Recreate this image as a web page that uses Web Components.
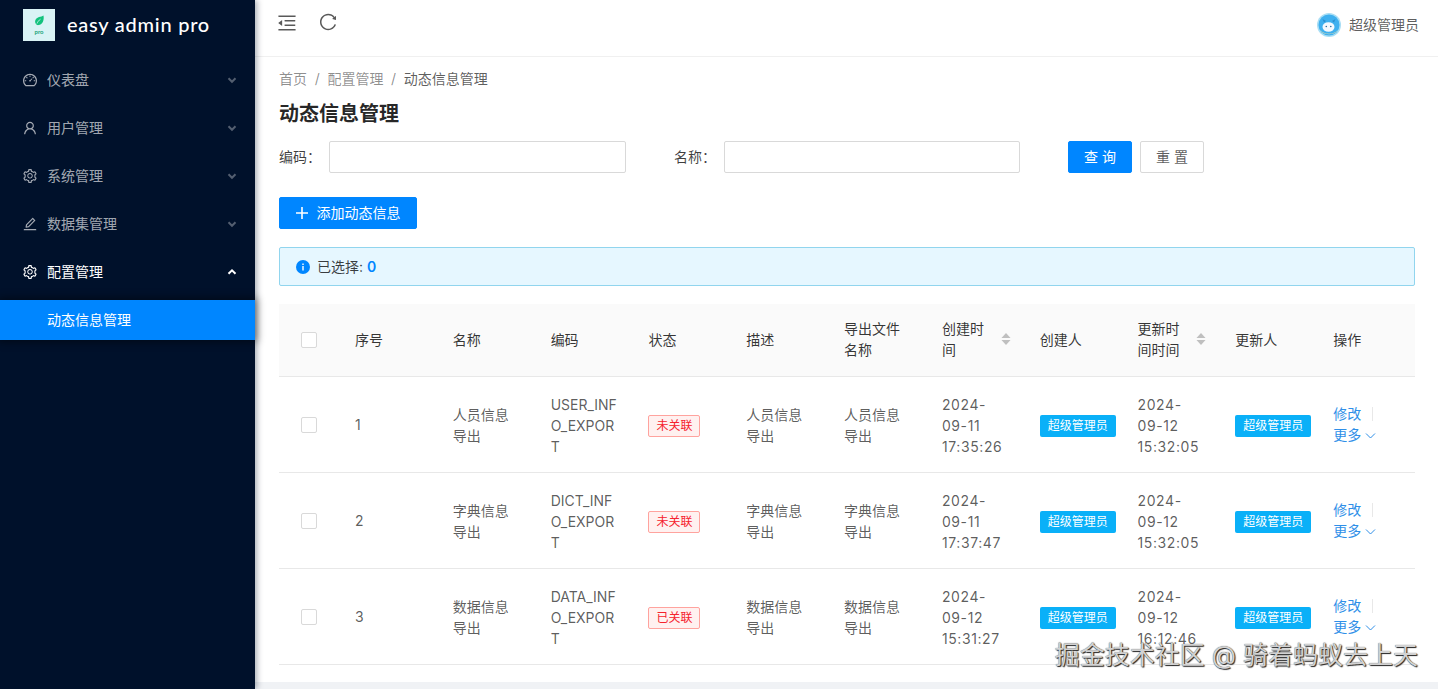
<!DOCTYPE html>
<html lang="zh">
<head>
<meta charset="utf-8">
<title>easy admin pro</title>
<style>
  html, body { margin: 0; height: 100%; overflow: hidden; background: #f0f2f5; }
  body { font-family: Inter, "Noto Sans CJK SC", sans-serif; font-size: 14px; }
</style>
</head>
<body>
<admin-app></admin-app>
<script>
const ICONS = {
  dashboard: 'M924.8 385.6a446.7 446.7 0 0 0-96-142.4 446.7 446.7 0 0 0-142.4-96C631.1 123.8 572.5 112 512 112s-119.1 11.8-174.4 35.2a446.7 446.7 0 0 0-142.4 96 446.7 446.7 0 0 0-96 142.4C75.8 440.9 64 499.5 64 560c0 132.7 58.3 257.7 159.9 343.1l1.7 1.4c5.8 4.8 13.1 7.5 20.6 7.5h531.7c7.5 0 14.8-2.7 20.6-7.5l1.7-1.4C901.7 817.7 960 692.7 960 560c0-60.5-11.9-119.1-35.2-174.4zM761.4 836H262.6A371.12 371.12 0 0 1 140 560c0-99.4 38.7-192.8 109-263 70.3-70.3 163.7-109 263-109 99.4 0 192.8 38.7 263 109 70.3 70.3 109 163.7 109 263 0 105.6-44.5 205.5-122.6 276zM623.5 421.5a8.03 8.03 0 0 0-11.3 0L527.7 506c-18.7-5-39.4-.2-54.1 14.5a55.95 55.95 0 0 0 0 79.2 55.95 55.95 0 0 0 79.2 0 55.87 55.87 0 0 0 14.5-54.1l84.5-84.5c3.1-3.1 3.1-8.2 0-11.3l-28.3-28.3zM490 320h44c4.4 0 8-3.6 8-8v-80c0-4.4-3.6-8-8-8h-44c-4.4 0-8 3.6-8 8v80c0 4.4 3.6 8 8 8zm260 218v44c0 4.4 3.6 8 8 8h80c4.4 0 8-3.6 8-8v-44c0-4.4-3.6-8-8-8h-80c-4.4 0-8 3.6-8 8zm12.7-197.2l-31.1-31.1a8.03 8.03 0 0 0-11.3 0l-56.6 56.6a8.03 8.03 0 0 0 0 11.3l31.1 31.1c3.1 3.1 8.2 3.1 11.3 0l56.6-56.6c3.1-3.1 3.1-8.2 0-11.3zm-458.6-31.1a8.03 8.03 0 0 0-11.3 0l-31.1 31.1a8.03 8.03 0 0 0 0 11.3l56.6 56.6c3.1 3.1 8.2 3.1 11.3 0l31.1-31.1c3.1-3.1 3.1-8.2 0-11.3l-56.6-56.6zM262 530h-80c-4.4 0-8 3.6-8 8v44c0 4.4 3.6 8 8 8h80c4.4 0 8-3.6 8-8v-44c0-4.4-3.6-8-8-8z',
  user: 'M858.5 763.6a374 374 0 0 0-80.6-119.5 375.63 375.63 0 0 0-119.5-80.6c-.4-.2-.8-.3-1.2-.5C719.5 518 760 444.7 760 362c0-137-111-248-248-248S264 225 264 362c0 82.7 40.5 156 102.8 201.1-.4.2-.8.3-1.2.5-44.8 18.9-85 46-119.5 80.6a375.63 375.63 0 0 0-80.6 119.5A371.7 371.7 0 0 0 136 901.8a8 8 0 0 0 8 8.2h60c4.4 0 7.9-3.5 8-7.8 2-77.2 33-149.5 87.8-204.3 56.7-56.7 132-87.9 212.2-87.9s155.5 31.2 212.2 87.9C779 752.7 810 825 812 902.2c.1 4.4 3.6 7.8 8 7.8h60a8 8 0 0 0 8-8.2c-1-47.8-10.9-94.3-29.5-138.2zM512 534c-45.9 0-89.1-17.9-121.6-50.4S340 407.9 340 362c0-45.9 17.9-89.1 50.4-121.6S466.1 190 512 190s89.1 17.9 121.6 50.4S684 316.1 684 362c0 45.9-17.9 89.1-50.4 121.6S557.9 534 512 534z',
  setting: 'M924.8 625.7l-65.5-56c3.1-19 4.7-38.4 4.7-57.8s-1.6-38.8-4.7-57.8l65.5-56a32.03 32.03 0 0 0 9.3-35.2l-.9-2.6a443.74 443.74 0 0 0-79.7-137.9l-1.8-2.1a32.12 32.12 0 0 0-35.1-9.5l-81.3 28.9c-30-24.6-63.5-44-99.7-57.6l-15.7-85a32.05 32.05 0 0 0-25.8-25.7l-2.7-.5c-52.1-9.4-106.9-9.4-159 0l-2.7.5a32.05 32.05 0 0 0-25.8 25.7l-15.8 85.4a351.86 351.86 0 0 0-99 57.4l-81.9-29.1a32 32 0 0 0-35.1 9.5l-1.8 2.1a446.02 446.02 0 0 0-79.7 137.9l-.9 2.6c-4.5 12.5-.8 26.5 9.3 35.2l66.3 56.6c-3.1 18.8-4.6 38-4.6 57.1 0 19.2 1.5 38.4 4.6 57.1L99 625.5a32.03 32.03 0 0 0-9.3 35.2l.9 2.6c18.1 50.4 44.9 96.9 79.7 137.9l1.8 2.1a32.12 32.12 0 0 0 35.1 9.5l81.9-29.1c29.8 24.5 63.1 43.9 99 57.4l15.8 85.4a32.05 32.05 0 0 0 25.8 25.7l2.7.5a449.4 449.4 0 0 0 159 0l2.7-.5a32.05 32.05 0 0 0 25.8-25.7l15.7-85a350 350 0 0 0 99.7-57.6l81.3 28.9a32 32 0 0 0 35.1-9.5l1.8-2.1c34.8-41.1 61.6-87.5 79.7-137.9l.9-2.6c4.5-12.3.8-26.3-9.3-35zM788.3 465.9c2.5 15.1 3.8 30.6 3.8 46.1s-1.3 31-3.8 46.1l-6.6 40.1 74.7 63.9a370.03 370.03 0 0 1-42.6 73.6L721 702.8l-31.4 25.8c-23.9 19.6-50.5 35-79.3 45.8l-38.1 14.3-17.9 97a377.5 377.5 0 0 1-85 0l-17.9-97.2-37.8-14.5c-28.5-10.8-55-26.2-78.7-45.7l-31.4-25.9-93.4 33.2c-17-22.9-31.2-47.6-42.6-73.6l75.5-64.5-6.5-40c-2.4-14.9-3.7-30.3-3.7-45.5 0-15.3 1.2-30.6 3.7-45.5l6.5-40-75.5-64.5c11.3-26.1 25.6-50.7 42.6-73.6l93.4 33.2 31.4-25.9c23.7-19.5 50.2-34.9 78.7-45.7l37.9-14.3 17.9-97.2c28.1-3.2 56.8-3.2 85 0l17.9 97 38.1 14.3c28.7 10.8 55.4 26.2 79.3 45.8l31.4 25.8 92.8-32.9c17 22.9 31.2 47.6 42.6 73.6L781.8 426l6.5 39.9zM512 326c-97.2 0-176 78.8-176 176s78.8 176 176 176 176-78.8 176-176-78.8-176-176-176zm79.2 255.2A111.6 111.6 0 0 1 512 614c-29.9 0-58-11.7-79.2-32.8A111.6 111.6 0 0 1 400 502c0-29.9 11.7-58 32.8-79.2C454 401.6 482.1 390 512 390c29.9 0 58 11.6 79.2 32.8A111.6 111.6 0 0 1 624 502c0 29.9-11.7 58-32.8 79.2z',
  edit: 'M257.7 752c2 0 4-.2 6-.5L431.9 722c2-.4 3.9-1.3 5.3-2.8l423.9-423.9a9.96 9.96 0 0 0 0-14.1L694.9 114.9c-1.9-1.9-4.4-2.9-7.1-2.9s-5.2 1-7.1 2.9L256.8 538.8c-1.5 1.5-2.4 3.3-2.8 5.3l-29.5 168.2a33.5 33.5 0 0 0 9.4 29.8c6.6 6.4 14.9 9.9 23.8 9.9zm67.4-174.4L687.8 215l73.3 73.3-362.7 362.6-88.9 15.7 15.6-89zM880 836H144c-17.7 0-32 14.3-32 32v36c0 4.4 3.6 8 8 8h784c4.4 0 8-3.6 8-8v-36c0-17.7-14.3-32-32-32z',
  fold: 'M408 442h480c4.4 0 8-3.6 8-8v-56c0-4.4-3.6-8-8-8H408c-4.4 0-8 3.6-8 8v56c0 4.4 3.6 8 8 8zm-8 204c0 4.4 3.6 8 8 8h480c4.4 0 8-3.6 8-8v-56c0-4.4-3.6-8-8-8H408c-4.4 0-8 3.6-8 8v56zm504-486H120c-4.4 0-8 3.6-8 8v56c0 4.4 3.6 8 8 8h784c4.4 0 8-3.6 8-8v-56c0-4.4-3.6-8-8-8zm0 632H120c-4.4 0-8 3.6-8 8v56c0 4.4 3.6 8 8 8h784c4.4 0 8-3.6 8-8v-56c0-4.4-3.6-8-8-8zM115.4 518.9L271.7 642c5.8 4.6 14.4.5 14.4-6.9V388.9c0-7.4-8.5-11.5-14.4-6.9L115.4 505.1a8.74 8.74 0 0 0 0 13.8z',
  reload: 'M909.1 209.3l-56.4 44.1C775.8 155.1 656.2 92 521.9 92 290 92 102.3 279.5 102 511.5 101.7 743.7 289.8 932 521.9 932c181.3 0 335.8-115 394.6-276.1 1.5-4.2-.7-8.9-4.9-10.3l-56.7-19.5a8 8 0 0 0-10.1 4.8c-1.8 5-3.8 10-5.9 14.9-17.3 41-42.1 77.8-73.7 109.4A344.77 344.77 0 0 1 655.9 829c-42.3 17.9-87.4 27-133.8 27-46.5 0-91.5-9.1-133.8-27A341.5 341.5 0 0 1 279 755.2a342.16 342.16 0 0 1-73.7-109.4c-17.9-42.4-27-87.4-27-133.9s9.1-91.5 27-133.9c17.3-41 42.1-77.8 73.7-109.4 31.6-31.6 68.4-56.4 109.3-73.8 42.3-17.9 87.4-27 133.8-27 46.5 0 91.5 9.1 133.8 27a341.5 341.5 0 0 1 109.3 73.8c9.9 9.9 19.2 20.4 27.8 31.4l-60.2 47a8 8 0 0 0 3 14.1l175.6 43c5 1.2 9.9-2.6 9.9-7.7l.8-180.9c-.1-6.6-7.8-10.3-13-6.2z'
}

const svgIcon = (name, size, style = '') =>
  `<svg width="${size}" height="${size}" viewBox="0 0 1024 1024" fill="currentColor" style="display:block;flex:none;${style}"><path d="${ICONS[name]}"/></svg>`

class NavItem extends HTMLElement {
  constructor () {
    super()
    this.shadow = this.attachShadow({ mode: 'open' })
  }

  connectedCallback () {
    const open = this.hasAttribute('open')
    const arrow = this.hasAttribute('sub') ? '' : `
      <svg class="arrow" width="10" height="10" viewBox="0 0 10 10" fill="none" stroke="currentColor" stroke-width="2">
        <path d="${open ? 'M1.5 6.8 5 3.3l3.5 3.5' : 'M1.5 3.3 5 6.8l3.5-3.5'}"/>
      </svg>`
    this.shadow.innerHTML = /*html*/`
      <style>
        :host {
          display: flex;
          align-items: center;
          height: 40px;
          margin-bottom: 8px;
          padding: 0 18px 0 22px;
          color: rgba(255,255,255,0.65);
          font-size: 14px;
        }
        :host([open]) { color: #fff; }
        :host([sub]) {
          margin-bottom: 0;
          padding-left: 47px;
          background: #0086ff;
          color: #fff;
          box-shadow: 0 0 8px 2px rgba(0,0,0,0.45);
        }
        .label { flex: 1; margin-left: 9px; padding-bottom: 2px; }
        :host([sub]) .label { margin-left: 0; }
        .arrow { display: block; opacity: .5; }
        :host([open]) .arrow { opacity: 1; }
      </style>
      ${this.getAttribute('icon') ? svgIcon(this.getAttribute('icon'), 16) : ''}
      <span class="label"><slot></slot></span>
      ${arrow}
    `
  }
}

class AppSidebar extends HTMLElement {
  constructor () {
    super()
    this.shadow = this.attachShadow({ mode: 'open' })
  }

  connectedCallback () {
    this.shadow.innerHTML = /*html*/`
      <style>
        :host {
          display: block;
          flex: none;
          width: 255px;
          height: 100%;
          background: #00112b;
          box-shadow: 2px 0 6px rgba(0,21,41,0.35);
          position: relative;
          z-index: 2;
        }
        .logo {
          display: flex;
          align-items: center;
          gap: 12px;
          height: 32px;
          padding: 9px 0 19px 23px;
          color: #fff;
          font-family: Lato, sans-serif;
          font-size: 20px;
          font-weight: 500;
          letter-spacing: .75px;
        }
        .logo span { padding-bottom: 3px; }
        .logo svg { display: block; }
      </style>
      <div class="logo">
        <svg width="32" height="32" viewBox="0 0 32 32">
          <rect width="32" height="32" fill="#d9f3f5"/>
          <path d="M20.500 6.500c.8 4.500-.6 9-5 9.600-1.200.2-2.700-.7-3.200-2.300-.7-2.500 1-5 3.700-5.800 1.700-.4 3.400-.6 4.500-1.500z" fill="#12c27c"/>
          <path d="M14 14.500c.7-1.800 1.800-3.200 3.500-4.300" stroke="#d9f3f5" stroke-width=".8" fill="none"/>
          <text x="16" y="24.500" text-anchor="middle" font-size="6" font-weight="700" fill="#22a57a" font-family="Lato, sans-serif" letter-spacing="0">pro</text>
        </svg>
        <span>easy admin pro</span>
      </div>
      <nav-item icon="dashboard">仪表盘</nav-item>
      <nav-item icon="user">用户管理</nav-item>
      <nav-item icon="setting">系统管理</nav-item>
      <nav-item icon="edit">数据集管理</nav-item>
      <nav-item icon="setting" open>配置管理</nav-item>
      <nav-item sub>动态信息管理</nav-item>
    `
  }
}

class AppHeader extends HTMLElement {
  constructor () {
    super()
    this.shadow = this.attachShadow({ mode: 'open' })
  }

  connectedCallback () {
    this.shadow.innerHTML = /*html*/`
      <style>
        :host {
          display: flex;
          align-items: flex-start;
          flex: none;
          box-sizing: border-box;
          height: 57px;
          padding: 0 19px 0 21px;
          background: #fff;
          border-bottom: 1px solid #f0f0f0;
          color: rgba(0,0,0,0.65);
        }
        .tools { display: flex; align-items: flex-start; gap: 20px; flex: 1; padding-top: 12px; }
        .user { display: flex; align-items: center; gap: 8px; height: 49px; }
        .user span { padding-bottom: 2px; }
        .avatar { display: block; }
      </style>
      <div class="tools">
        ${svgIcon('fold', 22)}
        ${svgIcon('reload', 20)}
      </div>
      <div class="user">
        <svg class="avatar" width="24" height="24" viewBox="0 0 24 24">
          <circle cx="12" cy="12" r="12" fill="#a8def5"/>
          <circle cx="12" cy="12" r="10.500" fill="#3fb0ef"/>
          <path d="M3.500 17c3 5 14 5 17 0-1 5.500-16 5.500-17 0z" fill="#e9dfa8"/>
          <path d="M7 9.500 5.500 6 9 8zM17 9.500 18.500 6 15 8z" fill="#2b8fd0"/>
          <ellipse cx="11.500" cy="14" rx="6" ry="4.800" fill="#f4f9ff"/>
          <circle cx="9.300" cy="13.500" r=".8" fill="#2a6d9c"/>
          <circle cx="13.800" cy="13.500" r=".8" fill="#2a6d9c"/>
        </svg>
        <span>超级管理员</span>
      </div>
    `
  }
}

class UiButton extends HTMLElement {
  constructor () {
    super()
    this.shadow = this.attachShadow({ mode: 'open' })
  }

  connectedCallback () {
    this.shadow.innerHTML = /*html*/`
      <style>
        :host {
          display: inline-flex;
          align-items: center;
          justify-content: center;
          box-sizing: border-box;
          height: 32px;
          min-width: 64px;
          padding-bottom: 2px;
          border: 1px solid #d9d9d9;
          border-radius: 2px;
          background: #fff;
          color: rgba(0,0,0,0.65);
          font-size: 14px;
        }
        :host([primary]) {
          background: #0086ff;
          border-color: #0086ff;
          color: #fff;
        }
      </style>
      <slot></slot>
    `
  }
}

class SearchForm extends HTMLElement {
  constructor () {
    super()
    this.shadow = this.attachShadow({ mode: 'open' })
  }

  connectedCallback () {
    this.shadow.innerHTML = /*html*/`
      <style>
        :host {
          display: flex;
          align-items: center;
          height: 32px;
          color: rgba(0,0,0,0.75);
        }
        .label { width: 50px; flex: none; padding-bottom: 2px; }
        .box {
          box-sizing: border-box;
          height: 32px;
          border: 1px solid #d9d9d9;
          border-radius: 2px;
          background: #fff;
        }
        .btns { display: flex; gap: 8px; margin-left: 48px; }
      </style>
      <span class="label">编码：</span>
      <div class="box" style="width:297px;margin-right:48px"></div>
      <span class="label">名称：</span>
      <div class="box" style="width:296px"></div>
      <div class="btns">
        <ui-button primary>查&nbsp;询</ui-button>
        <ui-button>重&nbsp;置</ui-button>
      </div>
    `
  }
}

class AlertBar extends HTMLElement {
  constructor () {
    super()
    this.shadow = this.attachShadow({ mode: 'open' })
  }

  connectedCallback () {
    this.shadow.innerHTML = /*html*/`
      <style>
        :host {
          display: flex;
          align-items: center;
          gap: 7px;
          box-sizing: border-box;
          height: 39px;
          padding-left: 16px;
          border: 1px solid #91d5ee;
          border-radius: 2px;
          background: #e6f7ff;
          color: rgba(0,0,0,0.75);
        }
        svg { display: block; }
        span { padding-bottom: 1px; }
        b { color: #0086ff; font-weight: 600; }
      </style>
      <svg width="14" height="14" viewBox="0 0 14 14">
        <circle cx="7" cy="7" r="7" fill="#0086ff"/>
        <rect x="6.300" y="6" width="1.400" height="4.500" fill="#fff"/>
        <rect x="6.300" y="3.500" width="1.400" height="1.500" fill="#fff"/>
      </svg>
      <span>已选择: <b>0</b></span>
    `
  }
}

class TableCell extends HTMLElement {
  constructor () {
    super()
    this.shadow = this.attachShadow({ mode: 'open' })
  }

  connectedCallback () {
    this.shadow.innerHTML = /*html*/`
      <style>
        :host {
          display: flex;
          align-items: center;
          justify-content: space-between;
          padding: 0 14px 0 16px;
          line-height: 21px;
          min-width: 0;
        }
        :host([nudge]) { padding-top: 2px; }
        :host([time]) { letter-spacing: .6px; }
        .sorter { display: flex; flex-direction: column; gap: 2px; color: #bfbfbf; margin-right: -1px; }
        .sorter svg { display: block; }
      </style>
      <div><slot></slot></div>
      ${this.hasAttribute('sort') ? `
        <div class="sorter">
          <svg width="10" height="5" viewBox="0 0 10 5"><path d="M5 0 9.500 5H.5z" fill="currentColor"/></svg>
          <svg width="10" height="5" viewBox="0 0 10 5"><path d="M5 5 .5 0h9z" fill="currentColor"/></svg>
        </div>` : ''}
    `
  }
}

class TableCheck extends HTMLElement {
  constructor () {
    super()
    this.shadow = this.attachShadow({ mode: 'open' })
  }

  connectedCallback () {
    this.shadow.innerHTML = `<style>
      :host { display: flex; align-items: center; padding-left: 22px; }
      i { display: block; box-sizing: border-box; width: 16px; height: 16px; border: 1px solid #d9d9d9; border-radius: 2px; background: #fff; }
    </style><i></i>`
  }
}

class UiTag extends HTMLElement {
  constructor () {
    super()
    this.shadow = this.attachShadow({ mode: 'open' })
  }

  connectedCallback () {
    this.shadow.innerHTML = /*html*/`
      <style>
        :host {
          display: block;
          box-sizing: border-box;
          height: 22px;
          padding: 0 7px;
          border: 1px solid #ffa39e;
          border-radius: 2px;
          background: #fff1f0;
          color: #f5222d;
          font-size: 12px;
          line-height: 19px;
          white-space: nowrap;
        }
        :host([kind="user"]) {
          padding: 0 8px;
          border: 0;
          line-height: 21px;
          background: #0ab0f8;
          color: #fff;
        }
      </style>
      <slot></slot>
    `
  }
}

class RowActions extends HTMLElement {
  constructor () {
    super()
    this.shadow = this.attachShadow({ mode: 'open' })
  }

  connectedCallback () {
    this.shadow.innerHTML = /*html*/`
      <style>
        :host { display: block; color: #2f8fe8; line-height: 21px; margin-top: -1px; }
        div { display: flex; align-items: center; height: 21px; }
        i { display: block; width: 1px; height: 14px; margin-left: 11px; background: #e8e8e8; }
        svg { display: block; margin-left: 4px; margin-top: 2px; }
      </style>
      <div>修改<i></i></div>
      <div>更多<svg width="11" height="11" viewBox="0 0 11 11" fill="none" stroke="currentColor" stroke-width="1"><path d="M1 3.500l4.500 4.500 4.500-4.500"/></svg></div>
    `
  }
}

class DataTable extends HTMLElement {
  constructor () {
    super()
    this.shadow = this.attachShadow({ mode: 'open' })
    this.rows = [
      { no: 1, name: '人员信息<br>导出', code: 'USER_INF<br>O_EXPOR<br>T', state: '未关联', created: '09-11<br>17:35:26', updated: '09-12<br>15:32:05' },
      { no: 2, name: '字典信息<br>导出', code: 'DICT_INF<br>O_EXPOR<br>T', state: '未关联', created: '09-11<br>17:37:47', updated: '09-12<br>15:32:05' },
      { no: 3, name: '数据信息<br>导出', code: 'DATA_INF<br>O_EXPOR<br>T', state: '已关联', created: '09-12<br>15:31:27', updated: '09-12<br>16:12:46' }
    ]
  }

  connectedCallback () {
    const body = this.rows.map(r => /*html*/`
      <div class="row">
        <table-check></table-check>
        <table-cell>${r.no}</table-cell>
        <table-cell>${r.name}</table-cell>
        <table-cell nudge>${r.code}</table-cell>
        <table-cell nudge><ui-tag>${r.state}</ui-tag></table-cell>
        <table-cell>${r.name}</table-cell>
        <table-cell>${r.name}</table-cell>
        <table-cell nudge time>2024-<br>${r.created}</table-cell>
        <table-cell nudge><ui-tag kind="user">超级管理员</ui-tag></table-cell>
        <table-cell nudge time>2024-<br>${r.updated}</table-cell>
        <table-cell nudge><ui-tag kind="user">超级管理员</ui-tag></table-cell>
        <table-cell><row-actions></row-actions></table-cell>
      </div>`).join('')
    this.shadow.innerHTML = /*html*/`
      <style>
        :host { display: block; }
        .row {
          display: grid;
          grid-template-columns: 60px repeat(11, 1fr);
          box-sizing: border-box;
          height: 96px;
          border-bottom: 1px solid #e8e8e8;
          color: rgba(0,0,0,0.65);
        }
        .head {
          height: 73px;
          padding-bottom: 2px;
          background: #fafafa;
          color: rgba(0,0,0,0.8);
        }
        .head table-check { margin-bottom: -2px; }
      </style>
      <div class="row head">
        <table-check></table-check>
        <table-cell>序号</table-cell>
        <table-cell>名称</table-cell>
        <table-cell>编码</table-cell>
        <table-cell>状态</table-cell>
        <table-cell>描述</table-cell>
        <table-cell>导出文件<br>名称</table-cell>
        <table-cell sort>创建时<br>间</table-cell>
        <table-cell>创建人</table-cell>
        <table-cell sort>更新时<br>间时间</table-cell>
        <table-cell>更新人</table-cell>
        <table-cell>操作</table-cell>
      </div>
      ${body}
    `
  }
}

class AdminApp extends HTMLElement {
  constructor () {
    super()
    this.shadow = this.attachShadow({ mode: 'open' })
  }

  connectedCallback () {
    this.shadow.innerHTML = /*html*/`
      <style>
        :host { display: flex; height: 100vh; overflow: hidden; position: relative; }
        .main { flex: 1; min-width: 0; display: flex; flex-direction: column; }
        .page {
          height: 625px;
          flex: none;
          box-sizing: border-box;
          padding: 11px 23px 0 24px;
          background: #fff;
        }
        .crumb { height: 21px; line-height: 21px; color: rgba(0,0,0,0.45); display: flex; gap: 7.700px; }
        .crumb b { font-weight: 400; color: rgba(0,0,0,0.65); }
        h1 { margin: 10px 0 6px; font-size: 20px; line-height: 30px; font-weight: 600; color: rgba(0,0,0,0.85); height: 36px; }
        search-form { margin: 0 0 24px; }
        .add { margin-bottom: 18px; }
        .add ui-button { width: 138px; gap: 9px; }
        .add svg { display: block; margin-top: 2px; }
        alert-bar { margin-bottom: 18px; }
        .mark {
          position: absolute;
          right: 20px;
          top: 638px;
          font-size: 25px;
          line-height: 34px;
          color: #d2d2d2;
          text-shadow: 1px 1px 1px #222, 0 0 1px #444;
          white-space: nowrap;
        }
      </style>
      <app-sidebar></app-sidebar>
      <div class="main">
        <app-header></app-header>
        <div class="page">
          <div class="crumb"><span>首页</span><span>/</span><span>配置管理</span><span>/</span><b>动态信息管理</b></div>
          <h1>动态信息管理</h1>
          <search-form></search-form>
          <div class="add">
            <ui-button primary>
              <svg width="12" height="12" viewBox="0 0 12 12"><path d="M5.200 0h1.600v5.200H12v1.600H6.800V12H5.200V6.800H0V5.200h5.200z" fill="#fff"/></svg>
              添加动态信息
            </ui-button>
          </div>
          <alert-bar></alert-bar>
          <data-table></data-table>
        </div>
      </div>
      <div class="mark">掘金技术社区 @ 骑着蚂蚁去上天</div>
    `
  }
}

customElements.define('nav-item', NavItem)
customElements.define('app-sidebar', AppSidebar)
customElements.define('app-header', AppHeader)
customElements.define('ui-button', UiButton)
customElements.define('search-form', SearchForm)
customElements.define('alert-bar', AlertBar)
customElements.define('table-cell', TableCell)
customElements.define('table-check', TableCheck)
customElements.define('ui-tag', UiTag)
customElements.define('row-actions', RowActions)
customElements.define('data-table', DataTable)
customElements.define('admin-app', AdminApp)
</script>
</body>
</html>
